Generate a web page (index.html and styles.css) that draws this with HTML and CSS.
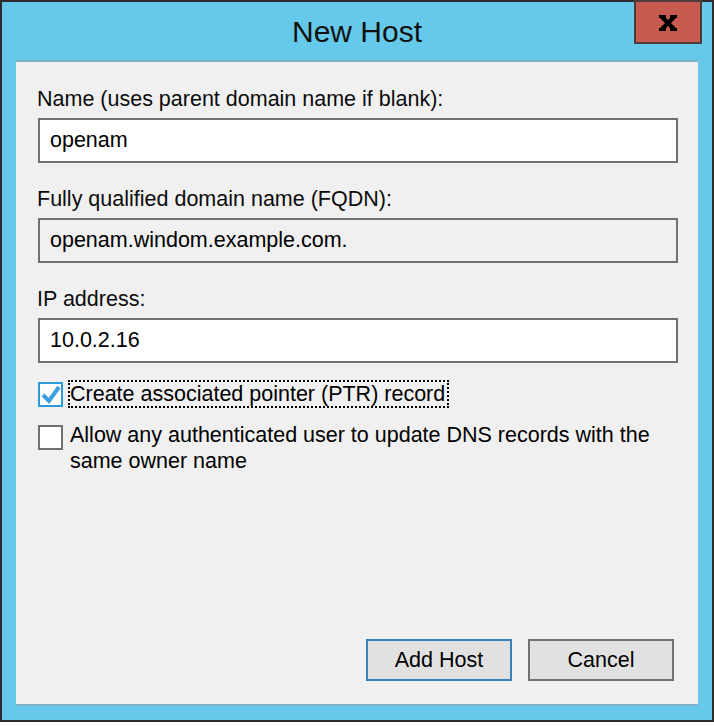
FILE: index.html
```html
<!DOCTYPE html>
<html>
<head>
<meta charset="utf-8">
<title>New Host</title>
<link rel="stylesheet" href="styles.css">
</head>
<body>
<div class="window">
  <div class="titlebar">
    <div class="title">New Host</div>
    <div class="close">
      <svg width="18" height="16" viewBox="0 0 18 16">
        <path d="M3 2 L15 14 M15 2 L3 14" stroke="#000" stroke-width="4.2" fill="none"/>
        <rect x="0" y="0" width="7" height="3" fill="#000"/>
        <rect x="11" y="0" width="7" height="3" fill="#000"/>
        <rect x="0" y="13" width="7" height="3" fill="#000"/>
        <rect x="11" y="13" width="7" height="3" fill="#000"/>
      </svg>
    </div>
  </div>
  <div class="panel">
    <div class="group">
      <div class="label">Name (uses parent domain name if blank):</div>
      <div class="field">openam</div>
    </div>
    <div class="group">
      <div class="label">Fully qualified domain name (FQDN):</div>
      <div class="field readonly">openam.windom.example.com.</div>
    </div>
    <div class="group">
      <div class="label">IP address:</div>
      <div class="field">10.0.2.16</div>
    </div>
    <div class="check-row first">
      <div class="box checked">
        <svg width="21" height="21" viewBox="0 0 21 21">
          <path d="M3 11 L9 17 L19 3" stroke="#3aa0dd" stroke-width="4" fill="none" stroke-linejoin="miter"/>
        </svg>
      </div>
      <span class="focus">Create associated pointer (PTR) record</span>
    </div>
    <div class="check-row second">
      <div class="box"></div>
      <span class="check-text">Allow any authenticated user to update DNS records with the<br>same owner name</span>
    </div>
    <div class="buttons">
      <div class="btn default">Add Host</div>
      <div class="btn">Cancel</div>
    </div>
  </div>
</div>
</body>
</html>
```

FILE: styles.css
```css
html, body {
  margin: 0;
  padding: 0;
  background: #ffffff;
}

body {
  font-family: "Liberation Sans", Arial, sans-serif;
  color: #000;
}

.window {
  position: relative;
  box-sizing: border-box;
  width: 714px;
  height: 722px;
  background: #66c9e9;
  border: 2px solid #2c2c2f;
  display: flex;
  flex-direction: column;
}

.titlebar {
  height: 58px;
  display: flex;
  align-items: flex-start;
  justify-content: center;
}

.title {
  font-size: 30px;
  line-height: 30px;
  margin-top: 15px;
  color: #111;
}

.close {
  position: absolute;
  top: -2px;
  right: 10px;
  box-sizing: border-box;
  width: 68px;
  height: 44px;
  background: #c65a4f;
  border: 2px solid #4f3a39;
  display: flex;
  align-items: center;
  justify-content: center;
}

.close svg {
  display: block;
  margin-top: 2px;
}

.panel {
  margin: 0 14px 14px 14px;
  flex: 1;
  background: #f0f0f0;
  border-top: 2px solid #7fb2c9;
  border-bottom: 2px solid #7fb2c9;
  padding: 24px 20px 23px 22px;
  display: flex;
  flex-direction: column;
  font-size: 21.5px;
}

.group {
  display: flex;
  flex-direction: column;
  margin-bottom: 23px;
}

.label {
  line-height: 26px;
  margin-left: -1px;
  margin-bottom: 6px;
  color: #0c0c0c;
}

.field {
  box-sizing: border-box;
  height: 45px;
  background: #fff;
  border: 2px solid #707070;
  padding: 0 10px;
  line-height: 41px;
}

.field.readonly {
  background: #f0f0f0;
}

.check-row {
  display: flex;
  align-items: flex-start;
}

.check-row.first {
  margin-top: -6px;
  height: 28px;
}

.check-row.second {
  margin-top: 14px;
}

.box {
  box-sizing: border-box;
  width: 25px;
  height: 25px;
  border: 2px solid #707070;
  background: #fff;
  margin-right: 5px;
  flex: none;
  display: flex;
  align-items: center;
  justify-content: center;
}

.first .box {
  margin-top: 2px;
}

.second .box {
  margin-top: 3px;
  margin-right: 7px;
}

.box.checked {
  border-color: #2b9bd9;
}

.box svg {
  display: block;
}

.focus {
  border: 2px dotted #000;
  line-height: 24px;
  padding: 0 2px 0 0;
}

.check-text {
  line-height: 26px;
}

.buttons {
  margin-top: auto;
  display: flex;
  justify-content: flex-end;
  gap: 16px;
  padding-right: 4px;
}

.btn {
  box-sizing: border-box;
  width: 146px;
  height: 42px;
  background: #e1e1e1;
  border: 2px solid #707070;
  display: flex;
  align-items: center;
  justify-content: center;
  font-size: 21.5px;
}

.btn.default {
  border-color: #3c80b5;
}
```
